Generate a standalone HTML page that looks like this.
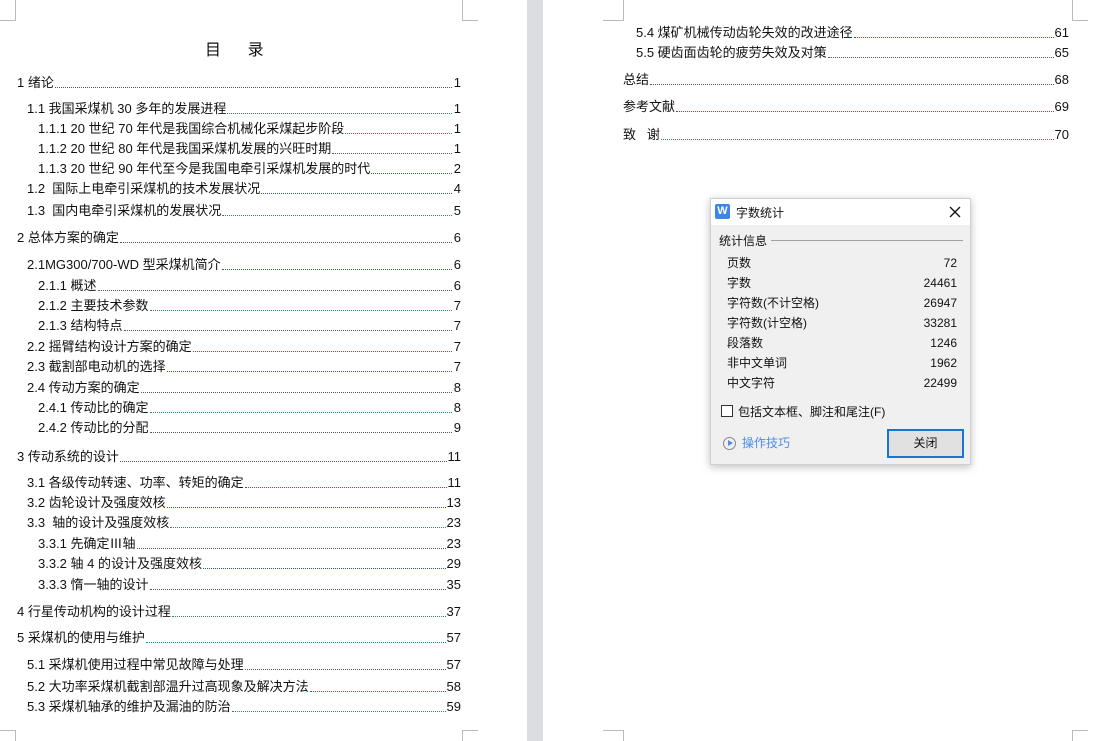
<!DOCTYPE html>
<html><head><meta charset="utf-8"><style>
*{margin:0;padding:0;box-sizing:border-box}
body{width:1095px;height:741px;background:#fff;position:relative;overflow:hidden;font-family:"Liberation Sans","Noto Sans CJK SC",sans-serif;font-size:13px;color:#111}
.gap{position:absolute;left:527px;top:0;width:16px;height:741px;background:#dcdde0}
.c{position:absolute;border-color:#bbb;border-style:solid;border-width:0}
.r{position:absolute;height:18px;display:flex;align-items:flex-end;line-height:18px;white-space:nowrap}
.r .d{flex:1;border-bottom:1px dotted #555;margin:0 1px 4px 1px;height:1px}
.r .n{min-width:8px;text-align:right}
.g .d{border-bottom-color:#2a8a5a}.b .d{border-bottom-color:#3050c0}.red .d{border-bottom-color:#c03030}
.dlg{position:absolute;left:710px;top:198px;width:261px;height:267px;background:#f0f0f0;border:1px solid #cfcfcf;box-shadow:0 2px 8px rgba(0,0,0,.25);font-size:12px}
.tb{height:26px;background:#fff;position:relative}
.row{position:absolute;left:16px;width:230px;display:flex;justify-content:space-between;align-items:baseline;line-height:18px}
</style></head><body>
<div class="gap"></div>
<div class="c" style="left:0;top:0;width:16px;height:21px;border-right-width:1px;border-bottom-width:1px"></div>
<div class="c" style="left:462px;top:0;width:16px;height:21px;border-left-width:1px;border-bottom-width:1px"></div>
<div class="c" style="left:603px;top:0;width:21px;height:21px;border-right-width:1px;border-bottom-width:1px"></div>
<div class="c" style="left:1072px;top:0;width:16px;height:21px;border-left-width:1px;border-bottom-width:1px"></div>
<div class="c" style="left:0;top:730px;width:16px;height:11px;border-right-width:1px;border-top-width:1px"></div>
<div class="c" style="left:462px;top:730px;width:16px;height:11px;border-left-width:1px;border-top-width:1px"></div>
<div class="c" style="left:603px;top:730px;width:21px;height:11px;border-right-width:1px;border-top-width:1px"></div>
<div class="c" style="left:1072px;top:730px;width:16px;height:11px;border-left-width:1px;border-top-width:1px"></div>
<div style="position:absolute;left:205px;top:36px;font-size:16px;letter-spacing:0">目&nbsp;&nbsp;&nbsp;&nbsp;&nbsp;&nbsp;录</div>

<div class="r" style="left:17px;right:634px;top:74px"><span>1 绪论</span><span class="d"></span><span class="n">1</span></div>
<div class="r g" style="left:27px;right:634px;top:100px"><span>1.1 我国采煤机 30 多年的发展进程</span><span class="d"></span><span class="n">1</span></div>
<div class="r g" style="left:38px;right:634px;top:120px"><span>1.1.1 20 世纪 70 年代是我国综合机械化采煤起步阶段</span><span class="d"></span><span class="n">1</span></div>
<div class="r" style="left:38px;right:634px;top:140px"><span>1.1.2 20 世纪 80 年代是我国采煤机发展的兴旺时期</span><span class="d"></span><span class="n">1</span></div>
<div class="r b" style="left:38px;right:634px;top:160px"><span>1.1.3 20 世纪 90 年代至今是我国电牵引采煤机发展的时代</span><span class="d"></span><span class="n">2</span></div>
<div class="r b" style="left:27px;right:634px;top:180px"><span>1.2&nbsp;&nbsp;国际上电牵引采煤机的技术发展状况</span><span class="d"></span><span class="n">4</span></div>
<div class="r g" style="left:27px;right:634px;top:202px"><span>1.3&nbsp;&nbsp;国内电牵引采煤机的发展状况</span><span class="d"></span><span class="n">5</span></div>
<div class="r" style="left:17px;right:634px;top:229px"><span>2 总体方案的确定</span><span class="d"></span><span class="n">6</span></div>
<div class="r b" style="left:27px;right:634px;top:256px"><span>2.1MG300/700-WD 型采煤机简介</span><span class="d"></span><span class="n">6</span></div>
<div class="r" style="left:38px;right:634px;top:277px"><span>2.1.1 概述</span><span class="d"></span><span class="n">6</span></div>
<div class="r g" style="left:38px;right:634px;top:297px"><span>2.1.2 主要技术参数</span><span class="d"></span><span class="n">7</span></div>
<div class="r" style="left:38px;right:634px;top:317px"><span>2.1.3 结构特点</span><span class="d"></span><span class="n">7</span></div>
<div class="r red" style="left:27px;right:634px;top:338px"><span>2.2 摇臂结构设计方案的确定</span><span class="d"></span><span class="n">7</span></div>
<div class="r b" style="left:27px;right:634px;top:358px"><span>2.3 截割部电动机的选择</span><span class="d"></span><span class="n">7</span></div>
<div class="r" style="left:27px;right:634px;top:379px"><span>2.4 传动方案的确定</span><span class="d"></span><span class="n">8</span></div>
<div class="r g" style="left:38px;right:634px;top:399px"><span>2.4.1 传动比的确定</span><span class="d"></span><span class="n">8</span></div>
<div class="r" style="left:38px;right:634px;top:419px"><span>2.4.2 传动比的分配</span><span class="d"></span><span class="n">9</span></div>
<div class="r" style="left:17px;right:634px;top:448px"><span>3 传动系统的设计</span><span class="d"></span><span class="n">11</span></div>
<div class="r red" style="left:27px;right:634px;top:474px"><span>3.1 各级传动转速、功率、转矩的确定</span><span class="d"></span><span class="n">11</span></div>
<div class="r b" style="left:27px;right:634px;top:494px"><span>3.2 齿轮设计及强度效核</span><span class="d"></span><span class="n">13</span></div>
<div class="r g" style="left:27px;right:634px;top:514px"><span>3.3&nbsp;&nbsp;轴的设计及强度效核</span><span class="d"></span><span class="n">23</span></div>
<div class="r" style="left:38px;right:634px;top:535px"><span>3.3.1 先确定Ⅲ轴</span><span class="d"></span><span class="n">23</span></div>
<div class="r b" style="left:38px;right:634px;top:555px"><span>3.3.2 轴 4 的设计及强度效核</span><span class="d"></span><span class="n">29</span></div>
<div class="r" style="left:38px;right:634px;top:576px"><span>3.3.3 惰一轴的设计</span><span class="d"></span><span class="n">35</span></div>
<div class="r g" style="left:17px;right:634px;top:603px"><span>4 行星传动机构的设计过程</span><span class="d"></span><span class="n">37</span></div>
<div class="r g" style="left:17px;right:634px;top:629px"><span>5 采煤机的使用与维护</span><span class="d"></span><span class="n">57</span></div>
<div class="r" style="left:27px;right:634px;top:656px"><span>5.1 采煤机使用过程中常见故障与处理</span><span class="d"></span><span class="n">57</span></div>
<div class="r red" style="left:27px;right:634px;top:678px"><span>5.2 大功率采煤机截割部温升过高现象及解决方法</span><span class="d"></span><span class="n">58</span></div>
<div class="r g" style="left:27px;right:634px;top:698px"><span>5.3 采煤机轴承的维护及漏油的防治</span><span class="d"></span><span class="n">59</span></div>

<div class="r red" style="left:636px;right:26px;top:24px"><span>5.4 煤矿机械传动齿轮失效的改进途径</span><span class="d"></span><span class="n">61</span></div>
<div class="r" style="left:636px;right:26px;top:44px"><span>5.5 硬齿面齿轮的疲劳失效及对策</span><span class="d"></span><span class="n">65</span></div>
<div class="r" style="left:623px;right:26px;top:71px"><span>总结</span><span class="d"></span><span class="n">68</span></div>
<div class="r red" style="left:623px;right:26px;top:98px"><span>参考文献</span><span class="d"></span><span class="n">69</span></div>
<div class="r g" style="left:623px;right:26px;top:126px"><span>致&nbsp;&nbsp;&nbsp;谢</span><span class="d"></span><span class="n">70</span></div>

<div class="dlg">
 <div class="tb">
  <div style="position:absolute;left:4px;top:5px;width:15px;height:15px;background:#3d86e8;border-radius:2px;color:#fff;font-size:11px;line-height:15px;text-align:center;font-weight:bold">W</div>
  <div style="position:absolute;left:25px;top:5px;font-size:12px">字数统计</div>
  <svg style="position:absolute;right:9px;top:7px" width="12" height="12" viewBox="0 0 12 12"><path d="M1 1L11 11M11 1L1 11" stroke="#111" stroke-width="1.3" fill="none"/></svg>
 </div>
 <div style="position:absolute;left:8px;top:33px">统计信息</div>
 <div style="position:absolute;left:60px;right:7px;top:41px;border-top:1px solid #a0a0a0"></div>
 <div class="row" style="top:55px"><span>页数</span><span>72</span></div>
 <div class="row" style="top:75px"><span>字数</span><span>24461</span></div>
 <div class="row" style="top:95px"><span>字符数(不计空格)</span><span>26947</span></div>
 <div class="row" style="top:115px"><span>字符数(计空格)</span><span>33281</span></div>
 <div class="row" style="top:135px"><span>段落数</span><span>1246</span></div>
 <div class="row" style="top:155px"><span>非中文单词</span><span>1962</span></div>
 <div class="row" style="top:175px"><span>中文字符</span><span>22499</span></div>
 <div style="position:absolute;left:10px;top:206px;width:12px;height:12px;border:1px solid #333;background:#fff"></div>
 <div style="position:absolute;left:27px;top:204px">包括文本框、脚注和尾注(F)</div>
 <div style="position:absolute;left:12px;top:238px;width:13px;height:13px;border:1px solid #888;border-radius:50%"></div>
 <div style="position:absolute;left:17px;top:241px;width:0;height:0;border-left:5px solid #4a8ee8;border-top:3.5px solid transparent;border-bottom:3.5px solid transparent"></div>
 <div style="position:absolute;left:31px;top:235px;color:#4a8ee8">操作技巧</div>
 <div style="position:absolute;left:176px;top:230px;width:77px;height:29px;border:2px solid #1a74d0;background:#e1e1e1;text-align:center;line-height:25px">关闭</div>
</div>
</body></html>
